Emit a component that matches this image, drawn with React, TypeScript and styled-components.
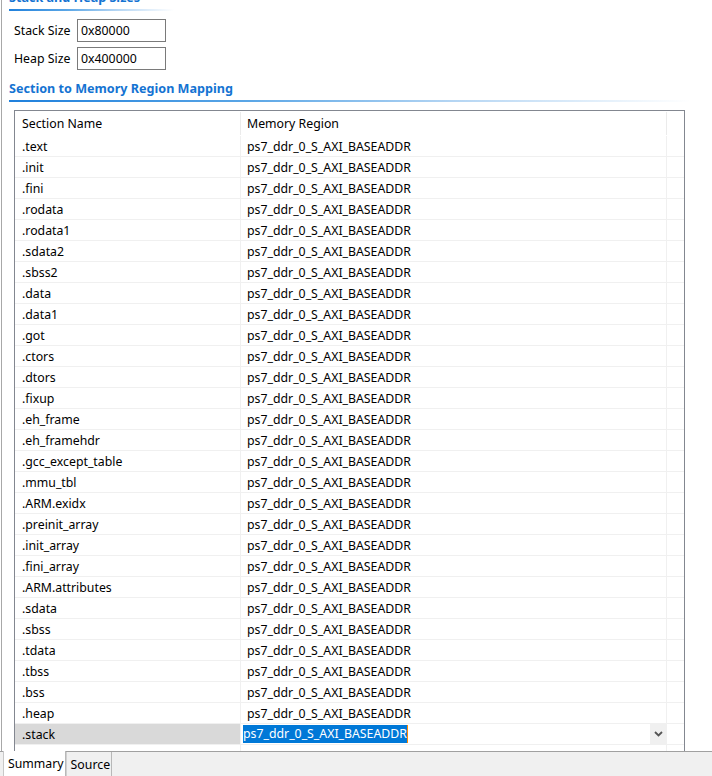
import React from "react";
import styled, { createGlobalStyle } from "styled-components";

const GlobalStyle = createGlobalStyle`
  html, body { margin: 0; padding: 0; background: #ffffff; }
  body { font-family: "Noto Sans", "Open Sans", Arial, sans-serif; font-size: 12.3px; color: #000; }
  * { box-sizing: border-box; }
`;

const Page = styled.div`
  width: 712px;
  height: 776px;
  display: flex;
  flex-direction: column;
  overflow: hidden;
  background: #ffffff;
`;

const Content = styled.div`
  flex: 1;
  min-height: 0;
  margin-left: 1px;
  border-left: 1px solid #a8a8a8;
  padding-left: 7px;
  display: flex;
  flex-direction: column;
  overflow: hidden;
`;

const Heading = styled.div<{ $lineWidth: number; $offset?: number }>`
  margin-top: ${(p) => p.$offset ?? 0}px;
  font-weight: 700;
  font-size: 12.6px;
  line-height: 16px;
  height: 16px;
  color: #1473d2;
  white-space: nowrap;
  position: relative;
  margin-bottom: 5px;
  &::after {
    content: "";
    position: absolute;
    left: 0;
    top: 19px;
    width: ${(p) => p.$lineWidth}px;
    height: 2px;
    background: linear-gradient(90deg, #1f80dc 0%, #5aa6e6 35%, #b4d5f3 65%, rgba(255,255,255,0) 100%);
  }
`;

const SizeGrid = styled.div`
  margin-top: 8px;
  padding-left: 5px;
  display: grid;
  grid-template-columns: 63px 89px;
  row-gap: 5px;
  align-items: center;
`;

const SizeLabel = styled.span`
  line-height: 16px;
`;

const SizeInput = styled.div`
  height: 23px;
  border: 1px solid #7a7a7a;
  padding-left: 3px;
  display: flex;
  align-items: center;
`;

const Table = styled.div`
  margin-top: 8px;
  margin-left: 5px;
  width: 671px;
  flex: 1;
  min-height: 0;
  border: 1px solid #838790;
  border-bottom: none;
  display: flex;
  flex-direction: column;
  overflow: hidden;
`;

const Row = styled.div<{ $header?: boolean }>`
  display: grid;
  grid-template-columns: 226px 426px 1fr;
  height: ${(p) => (p.$header ? 25 : 21)}px;
  flex: none;
  border-bottom: 1px solid ${(p) => (p.$header ? "transparent" : "#f0f0f0")};
`;

const Filler = styled.div`
  flex: 1;
  display: grid;
  grid-template-columns: 226px 426px 1fr;
`;

const Cell = styled.div<{ $pad?: number; $selected?: boolean; $divider?: boolean; $header?: boolean }>`
  display: flex;
  align-items: center;
  padding-left: ${(p) => p.$pad ?? 7}px;
  border-right: ${(p) => (p.$divider ? `1px solid ${p.$header ? "#ebebeb" : "#f0f0f0"}` : "none")};
  background: ${(p) => (p.$selected ? "#d9d9d9" : "transparent")};
  white-space: nowrap;
  overflow: hidden;
  margin-top: ${(p) => (p.$header ? 1 : 0)}px;
`;

const Editor = styled.div`
  display: flex;
  align-items: center;
  border-right: 1px solid #f0f0f0;
  padding-left: 2px;
`;

const Selected = styled.span`
  background: #0078d7;
  color: #ffffff;
  line-height: 18px;
  border-right: 1px solid #ff8a00;
`;

const DropButton = styled.div`
  margin-left: auto;
  width: 16px;
  height: 20px;
  background: #f0f0f0;
  display: flex;
  align-items: center;
  justify-content: center;
`;

const TabBar = styled.div`
  height: 25px;
  flex: none;
  border-top: 1px solid #a0a0a0;
  background: #f0f0f0;
  display: flex;
  padding-left: 3px;
`;

const Tab = styled.div<{ $active?: boolean }>`
  display: flex;
  align-items: center;
  padding: 0 1px 0 4px;
  background: ${(p) => (p.$active ? "#ffffff" : "#f0f0f0")};
  border-left: 1px solid ${(p) => (p.$active ? "#c8c8c8" : "#d0d0d0")};
  border-right: 1px solid #b8b8b8;
  margin-top: ${(p) => (p.$active ? -1 : 0)}px;
  height: ${(p) => (p.$active ? 25 : 24)}px;
`;

const sections = [
  ".text", ".init", ".fini", ".rodata", ".rodata1", ".sdata2", ".sbss2", ".data", ".data1",
  ".got", ".ctors", ".dtors", ".fixup", ".eh_frame", ".eh_framehdr", ".gcc_except_table",
  ".mmu_tbl", ".ARM.exidx", ".preinit_array", ".init_array", ".fini_array", ".ARM.attributes",
  ".sdata", ".sbss", ".tdata", ".tbss", ".bss", ".heap",
];

const REGION = "ps7_ddr_0_S_AXI_BASEADDR";

export default function App() {
  return (
    <>
      <GlobalStyle />
      <Page>
        <Content>
          <Heading $lineWidth={165} $offset={-10}>Stack and Heap Sizes</Heading>
          <SizeGrid>
            <SizeLabel>Stack Size</SizeLabel>
            <SizeInput>0x80000</SizeInput>
            <SizeLabel>Heap Size</SizeLabel>
            <SizeInput>0x400000</SizeInput>
          </SizeGrid>
          <Heading $lineWidth={682} $offset={11}>Section to Memory Region Mapping</Heading>
          <Table>
            <Row $header>
              <Cell $header $divider>Section Name</Cell>
              <Cell $header $divider $pad={6}>Memory Region</Cell>
              <Cell $header />
            </Row>
            {sections.map((s) => (
              <Row key={s}>
                <Cell $divider>{s}</Cell>
                <Cell $divider $pad={6}>{REGION}</Cell>
                <Cell />
              </Row>
            ))}
            <Row>
              <Cell $divider $selected>.stack</Cell>
              <Editor>
                <Selected>{REGION}</Selected>
                <DropButton>
                  <svg width="9" height="6" viewBox="0 0 9 6">
                    <polyline points="1,1 4.5,4.5 8,1" fill="none" stroke="#555" strokeWidth="1.8" />
                  </svg>
                </DropButton>
              </Editor>
              <Cell />
            </Row>
            <Filler>
              <Cell $divider />
              <Cell $divider />
              <Cell />
            </Filler>
          </Table>
        </Content>
        <TabBar>
          <Tab $active>Summary</Tab>
          <Tab>Source</Tab>
        </TabBar>
      </Page>
    </>
  );
}
